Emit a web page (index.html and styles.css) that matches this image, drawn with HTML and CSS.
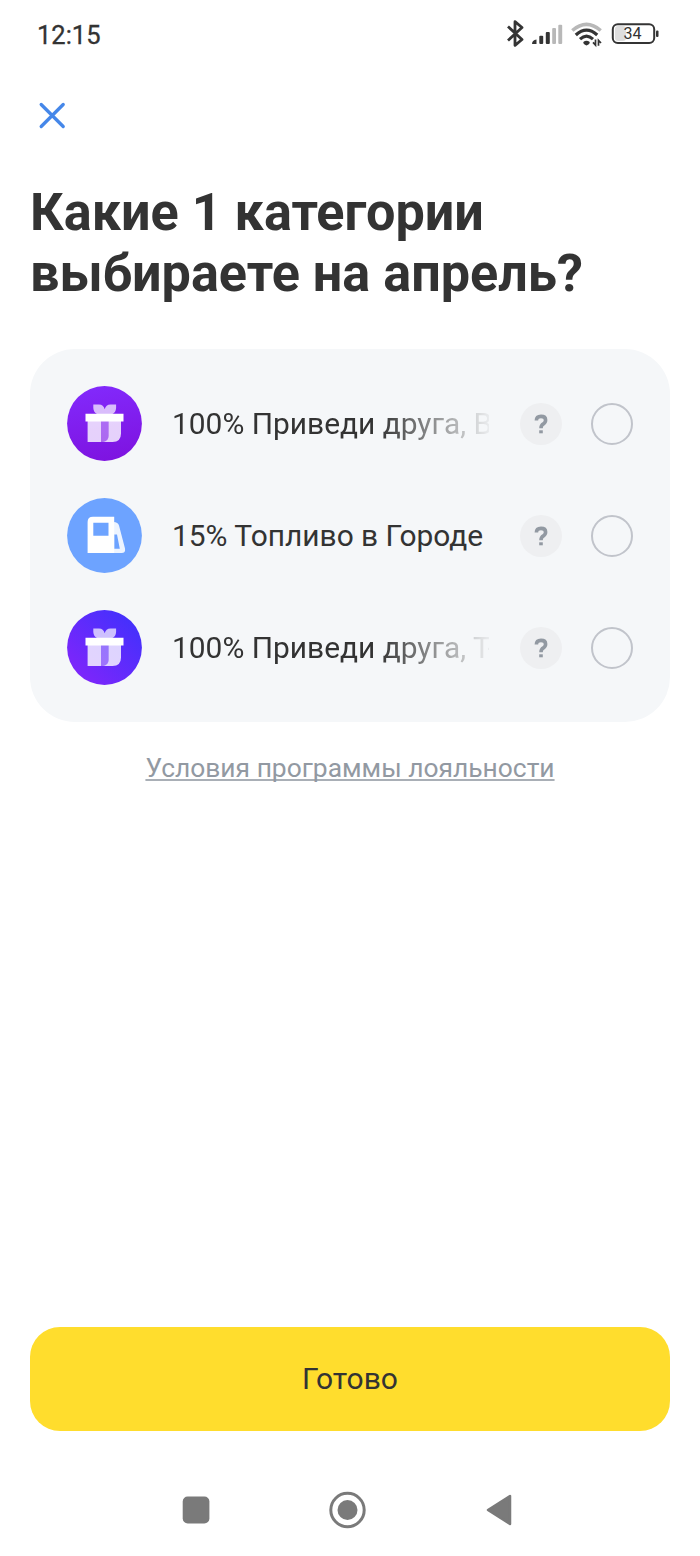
FILE: index.html
```html
<!DOCTYPE html>
<html lang="ru">
<head>
<meta charset="utf-8">
<title>Выбор категории</title>
<link rel="stylesheet" href="styles.css">
</head>
<body>
<svg class="defs" aria-hidden="true">
  <defs>
    <linearGradient id="violet" x1="0.4" y1="0" x2="0.6" y2="1"><stop offset="0" stop-color="#8229fb"/><stop offset="1" stop-color="#7e13e0"/></linearGradient>
    <linearGradient id="indigo" x1="0.15" y1="0.85" x2="0.85" y2="0.15"><stop offset="0" stop-color="#7c26fb"/><stop offset="1" stop-color="#4630fc"/></linearGradient>
    <symbol id="gift" viewBox="0 0 75 75">
      <path d="M26.3 18.500H32Q36.500 18.500 37.700 23.300Q38.900 18.500 43.400 18.500H49.100V22Q48.800 26.500 45.500 28H30Q26.600 26.500 26.300 22Z" fill="#fff" opacity=".7"/>
      <path d="M20.600 35H34V56H20.600ZM41.500 35H54V47.500Q54 56 45.500 56H36Q41.500 55 41.500 50Z" fill="#fff" opacity=".8"/>
      <path d="M34 35H41.500V50Q41.500 55.500 36 56H34Z" fill="#fff" opacity=".35"/>
      <path d="M18.500 27.700H56.500V35.500H18.500Z" fill="#fff"/>
    </symbol>
  </defs>
</svg>
<main class="screen">
  <header class="status">
    <span class="time">12:15</span>
    <svg class="indicators" viewBox="0 0 160 40">
      <path d="M8 10.500L22 23.500L15 29.300V5.700L22 11.500L8 24.500" fill="none" stroke="#343434" stroke-width="2.800" stroke-linejoin="round"/>
      <g fill="#343434"><path d="M32 28Q32 24 36.500 23.500V28Z"/><rect x="39.300" y="19.800" width="3.900" height="8.200" rx="1"/><rect x="45.800" y="16" width="4" height="12" rx="1"/></g>
      <g fill="#b8b8b8"><rect x="52.200" y="12" width="3.800" height="16" rx="1"/><rect x="58.300" y="8.700" width="3.900" height="19.300" rx="1"/></g>
      <g fill="none">
        <path d="M72.300 14.500Q86.500 2.300 100.700 14.500" stroke="#b8b8b8" stroke-width="3.500"/>
        <path d="M75.800 18.900Q86.500 9.300 97.200 18.900" stroke="#343434" stroke-width="3.300"/>
        <path d="M80 23.200Q86.500 17 93 23.200" stroke="#343434" stroke-width="3.100"/>
        <path d="M95.500 23.500V29L93 26.300M98.500 29.800V24.300L101 27" stroke="#343434" stroke-width="1.700"/>
      </g>
      <path d="M83.300 26Q86.500 23.500 89.700 26Q90 28 86.500 29.600Q83 28 83.300 26Z" fill="#343434"/>
      <rect x="115" y="10" width="11" height="15" rx="3" fill="#dedede"/>
      <rect x="112.800" y="8.200" width="41.400" height="18.800" rx="5" fill="none" stroke="#343434" stroke-width="2"/>
      <rect x="156" y="14.500" width="2.500" height="6.500" rx="1" fill="#343434"/>
      <text x="132.500" y="23.300" text-anchor="middle" class="battery">34</text>
    </svg>
  </header>

  <svg class="close" viewBox="0 0 30 30" role="img" aria-label="Закрыть"><path d="M4.200 4.500L26.200 26.500M26.200 4.500L4.200 26.500"/></svg>

  <h1 class="title">Какие 1 категории<br>выбираете на апрель?</h1>

  <section class="card">
    <div class="row">
      <svg class="badge" viewBox="0 0 75 75"><circle cx="37.500" cy="37.500" r="37.400" fill="url(#violet)"/><use href="#gift"/></svg>
      <span class="label faded">100% Приведи друга, В</span>
      <span class="help"><svg viewBox="0 0 42 42"><path d="M16.400 17.600Q16.400 13.400 21 13.400Q25.600 13.400 25.600 17Q25.600 19.500 23.400 20.900Q21 22.200 21 25.300"/><path d="M21 27.300V30.300"/></svg></span>
      <span class="radio"></span>
    </div>
    <div class="row">
      <svg class="badge" viewBox="0 0 75 75"><circle cx="37.500" cy="37.500" r="37.400" fill="#6da3ff"/>
        <path d="M46.500 24Q51 24 52 27.500L58 50.500Q58.800 55 54.500 55H46.500ZM47.200 36.500V50.800H52.800L50 36.500Z" fill="#fff" fill-rule="evenodd" opacity=".88"/>
        <path d="M20.600 55V24Q20.600 18.800 26 18.800H47.200V55ZM26.300 24.800V37.800H41.500V24.800Z" fill="#fff" fill-rule="evenodd"/>
      </svg>
      <span class="label">15% Топливо в Городе</span>
      <span class="help"><svg viewBox="0 0 42 42"><path d="M16.400 17.600Q16.400 13.400 21 13.400Q25.600 13.400 25.600 17Q25.600 19.500 23.400 20.900Q21 22.200 21 25.300"/><path d="M21 27.300V30.300"/></svg></span>
      <span class="radio"></span>
    </div>
    <div class="row">
      <svg class="badge" viewBox="0 0 75 75"><circle cx="37.500" cy="37.500" r="37.400" fill="url(#indigo)"/><use href="#gift"/></svg>
      <span class="label faded">100% Приведи друга, Т-</span>
      <span class="help"><svg viewBox="0 0 42 42"><path d="M16.400 17.600Q16.400 13.400 21 13.400Q25.600 13.400 25.600 17Q25.600 19.500 23.400 20.900Q21 22.200 21 25.300"/><path d="M21 27.300V30.300"/></svg></span>
      <span class="radio"></span>
    </div>
  </section>

  <a class="terms">Условия программы лояльности</a>

  <button class="done">Готово</button>

  <nav class="nav">
    <svg viewBox="0 0 40 40"><rect x="6.700" y="6.500" width="26.700" height="27" rx="5" fill="#7a7a7a"/></svg>
    <svg viewBox="0 0 40 40"><circle cx="19.500" cy="20" r="16.700" fill="none" stroke="#7a7a7a" stroke-width="3"/><circle cx="19.500" cy="20" r="10" fill="#7a7a7a"/></svg>
    <svg viewBox="0 0 40 40"><path d="M9 20L31 6V34Z" fill="#7a7a7a" stroke="#7a7a7a" stroke-width="2.500" stroke-linejoin="round"/></svg>
  </nav>
</main>
</body>
</html>
```

FILE: styles.css
```css
* { box-sizing: border-box; }
body { margin: 0; background: #fff; font-family: Roboto, sans-serif; color: #333; }
.defs { display: block; width: 0; height: 0; }
.screen { width: 700px; height: 1556px; display: flex; flex-direction: column; padding: 0 30px; overflow: hidden; }
.status { height: 68px; flex: none; display: flex; justify-content: space-between; align-items: center; padding: 0 10px 0 7px; }
.time { font-size: 25.500px; line-height: 30px; font-weight: 400; -webkit-text-stroke: 0.3px #333; padding-top: 1px; }
.indicators { width: 160px; height: 40px; margin-top: 4px; }
.battery { font-family: Roboto, sans-serif; font-size: 16px; fill: #333; }
.close { width: 30px; height: 30px; margin: 32px 0 0 7px; flex: none; fill: none; stroke: #4587e9; stroke-width: 3.300; stroke-linecap: round; }
.title { margin: 52px 0 0; font-size: 52.200px; line-height: 61px; font-weight: 700; white-space: nowrap; }
.card { margin-top: 45px; height: 373px; flex: none; padding: 18.500px 37px 18px; border-radius: 45px; background: #f5f7f9; }
.row { height: 112px; display: flex; align-items: center; }
.badge { width: 75px; height: 75px; flex: none; }
.label { width: 317px; margin: 0 30.500px 0 30px; flex: none; overflow: hidden; white-space: nowrap; font-size: 29.900px; line-height: 40px; }
.faded { -webkit-mask-image: linear-gradient(to right, #000 65%, transparent 102%); mask-image: linear-gradient(to right, #000 65%, transparent 102%); }
.help { width: 42px; height: 42px; flex: none; border-radius: 50%; background: #eeeff1; margin-right: 29.500px; }
.help svg { display: block; width: 42px; height: 42px; fill: none; stroke: #9299a2; stroke-width: 3.600; }
.radio { width: 42px; height: 42px; flex: none; border: 2px solid #c1c4cb; border-radius: 50%; }
.terms { align-self: center; margin-top: 30px; font-size: 26.400px; line-height: 32px; color: #9299a2; text-decoration: underline; text-decoration-thickness: 2px; text-decoration-color: #a9afb6; text-underline-offset: 2px; text-decoration-skip-ink: none; white-space: nowrap; }
.done { margin: auto 0 0; height: 104px; flex: none; border: 0; border-radius: 30px; background: #ffdd2d; color: #333; font: 30px/40px Roboto, sans-serif; }
.nav { height: 125.500px; flex: none; display: flex; justify-content: space-between; align-items: center; padding: 33px 151px 0 146px; }
.nav svg { width: 40px; height: 40px; }
```
